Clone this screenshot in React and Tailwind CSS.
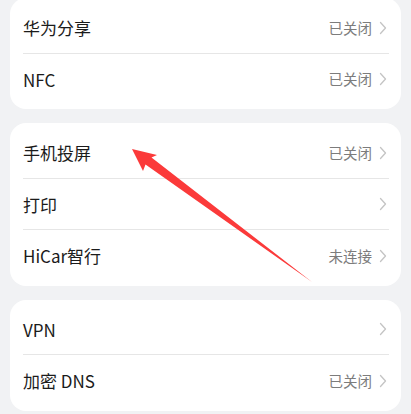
import React from "react";

const groups = [
  [
    { title: "华为分享", value: "已关闭" },
    { title: "NFC", value: "已关闭" },
  ],
  [
    { title: "手机投屏", value: "已关闭" },
    { title: "打印", value: "" },
    { title: "HiCar智行", value: "未连接" },
  ],
  [
    { title: "VPN", value: "" },
    { title: "加密 DNS", value: "已关闭" },
  ],
];

function Chevron() {
  return (
    <svg width="8" height="14" viewBox="0 0 8 14" className="ml-[7px]">
      <path
        d="M1.5 1.5 L6.5 7 L1.5 12.5"
        fill="none"
        stroke="#c4c4c4"
        strokeWidth="1.3"
        strokeLinecap="round"
        strokeLinejoin="round"
      />
    </svg>
  );
}

function Row({ title, value, last }) {
  return (
    <div className="relative flex h-[51.5px] items-center pl-[13px] pr-[14px]">
      <span className="flex-1 text-[17px] text-[#1b1b1b]">{title}</span>
      {value && <span className="text-[14.5px] text-[#7c7c7c]">{value}</span>}
      <Chevron />
      {!last && (
        <div className="absolute bottom-0 left-[13px] right-[12px] h-px bg-[#e6e6e6]" />
      )}
    </div>
  );
}

export default function App() {
  return (
    <div
      className="relative h-[414px] w-[411px] overflow-hidden bg-[#f1f2f4]"
      style={{ fontFamily: '"Noto Sans CJK SC", "Noto Sans", sans-serif' }}
    >
      <div className="flex flex-col gap-[14px] px-[10px] -mt-[2px]">
        {groups.map((rows, i) => (
          <div key={i} className="rounded-[16px] bg-white py-[4px]">
            {rows.map((r, j) => (
              <Row key={j} {...r} last={j === rows.length - 1} />
            ))}
          </div>
        ))}
      </div>

      <svg
        className="pointer-events-none absolute left-0 top-0"
        width="411"
        height="414"
        viewBox="0 0 411 414"
      >
        <polygon
          points="132,149 157,155 151.5,157.5 312,282 145.5,164.5 143,171"
          fill="#fb3a3a"
        />
      </svg>
    </div>
  );
}
